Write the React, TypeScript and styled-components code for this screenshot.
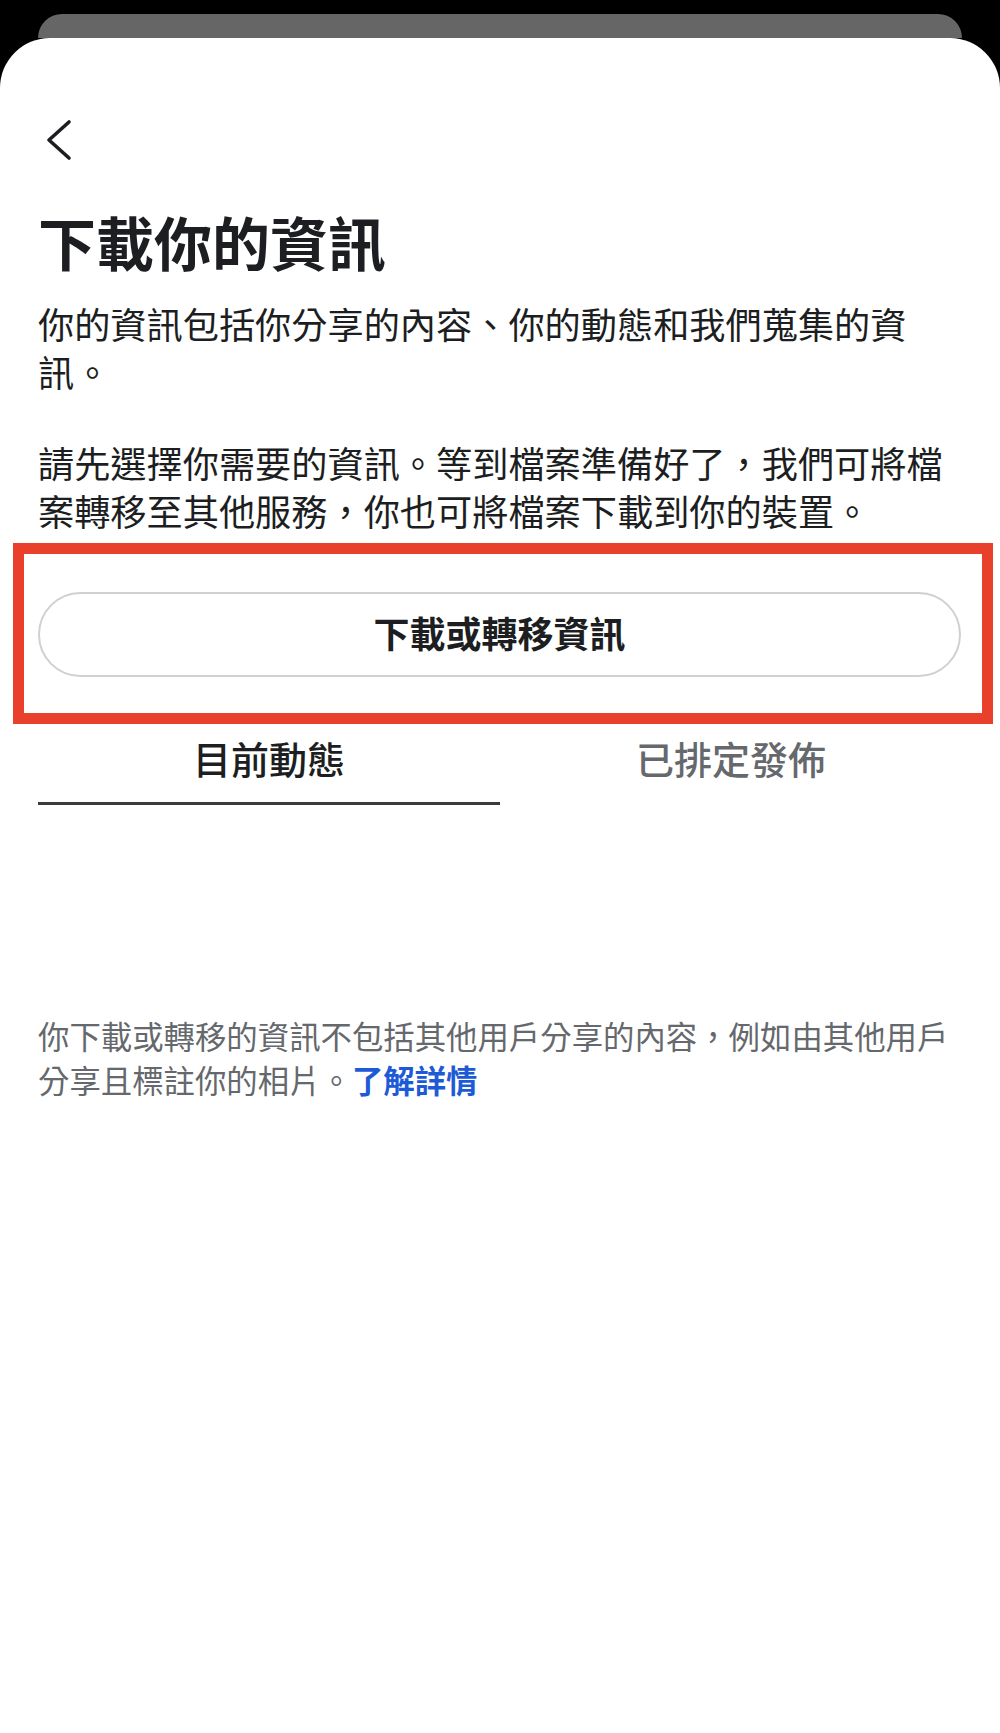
import React from "react";
import styled, { createGlobalStyle } from "styled-components";

const GlobalStyle = createGlobalStyle`
  html, body {
    margin: 0;
    padding: 0;
    background: #000;
  }
  body {
    font-family: "Noto Sans CJK TC", "Noto Sans", sans-serif;
    color: #1c1e21;
  }
`;

const Backdrop = styled.div`
  min-height: 1733px;
  padding-top: 14px;
  box-sizing: border-box;
  background: #000;
  display: flex;
  flex-direction: column;
`;

const BehindCard = styled.div`
  margin: 0 38px;
  height: 24px;
  background: #666666;
  border-radius: 32px 32px 0 0;
`;

const Sheet = styled.main`
  flex: 1;
  background: #fff;
  border-radius: 50px 50px 0 0;
  padding: 72px 38px 0;
  display: flex;
  flex-direction: column;
`;

const Nav = styled.nav`
  height: 60px;
  display: flex;
  align-items: center;
`;

const BackButton = styled.button`
  border: none;
  background: none;
  padding: 0;
  margin-left: 6px;
  display: flex;
  align-items: center;
  cursor: pointer;
`;

const Title = styled.h1`
  margin: 37px 0 0;
  font-size: 58px;
  line-height: 68px;
  font-weight: 700;
  color: #1c1e21;
`;

const Paragraph = styled.p<{ $gap: number }>`
  margin: ${({ $gap }) => $gap}px 0 0;
  font-size: 36.2px;
  line-height: 48px;
  font-weight: 400;
  color: #1c1e21;
`;

const Highlight = styled.div`
  margin: 9px -31px 0 -25px;
  border: 11px solid #e8402a;
  padding: 38px 21px 36px 14px;
`;

const PillButton = styled.button`
  width: 100%;
  height: 85px;
  padding: 0 0 6px;
  border: 2px solid #ced0d4;
  border-radius: 43px;
  background: #fff;
  font-family: inherit;
  font-size: 36px;
  font-weight: 600;
  color: #1c1e21;
  cursor: pointer;
`;

const Tabs = styled.div`
  display: grid;
  grid-template-columns: 1fr 1fr;
`;

const Tab = styled.div<{ $active?: boolean }>`
  text-align: center;
  padding: 10px 0 20px;
  font-size: 38px;
  line-height: 48px;
  font-weight: 500;
  color: ${({ $active }) => ($active ? "#1c1e21" : "#65686c")};
  border-bottom: 3px solid ${({ $active }) => ($active ? "#3a3b3c" : "transparent")};
`;

const Note = styled.p`
  margin: 209px 0 0;
  font-size: 31.4px;
  line-height: 44px;
  color: #65686c;
`;

const Link = styled.a`
  color: #1d5bd6;
  font-weight: 700;
  text-decoration: none;
`;

export default function App() {
  return (
    <>
      <GlobalStyle />
      <Backdrop>
        <BehindCard />
        <Sheet>
          <Nav>
            <BackButton aria-label="返回">
              <svg width="30" height="42" viewBox="0 0 30 42" fill="none">
                <path
                  d="M25 3 L5 21 L25 39"
                  stroke="#1c1e21"
                  strokeWidth="3.6"
                  strokeLinecap="round"
                  strokeLinejoin="round"
                />
              </svg>
            </BackButton>
          </Nav>
          <Title>下載你的資訊</Title>
          <Paragraph $gap={24}>
            你的資訊包括你分享的內容、你的動態和我們蒐集的資訊。
          </Paragraph>
          <Paragraph $gap={43}>
            請先選擇你需要的資訊。等到檔案準備好了，我們可將檔案轉移至其他服務，你也可將檔案下載到你的裝置。
          </Paragraph>
          <Highlight>
            <PillButton>下載或轉移資訊</PillButton>
          </Highlight>
          <Tabs>
            <Tab $active>目前動態</Tab>
            <Tab>已排定發佈</Tab>
          </Tabs>
          <Note>
            你下載或轉移的資訊不包括其他用戶分享的內容，例如由其他用戶分享且標註你的相片。
            <Link href="#">了解詳情</Link>
          </Note>
        </Sheet>
      </Backdrop>
    </>
  );
}
